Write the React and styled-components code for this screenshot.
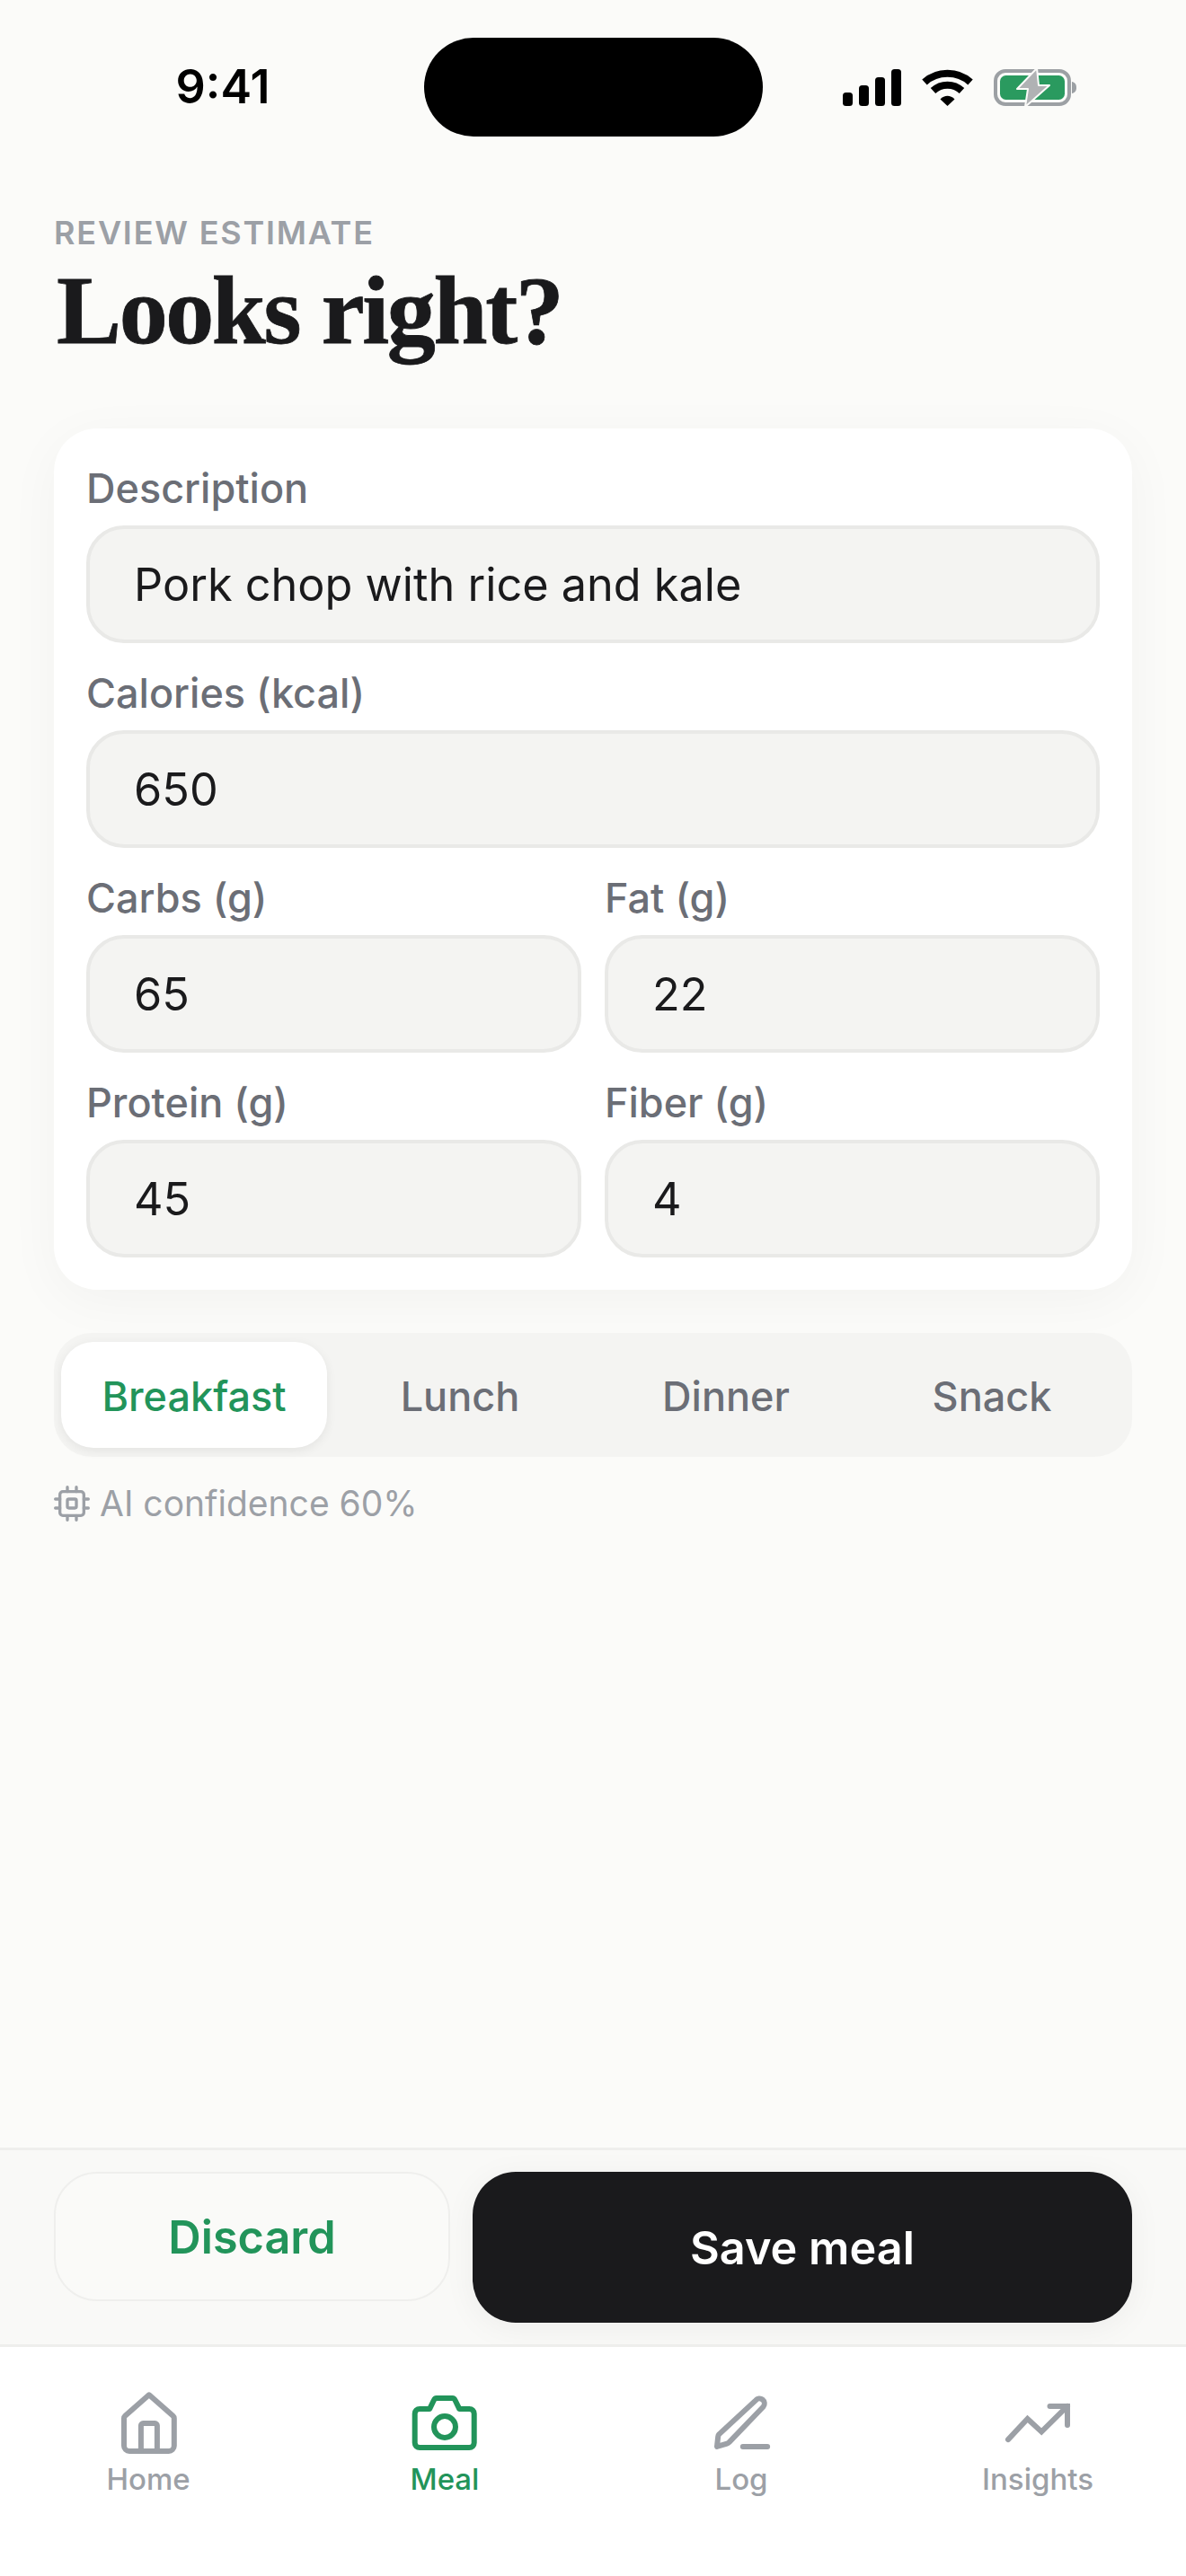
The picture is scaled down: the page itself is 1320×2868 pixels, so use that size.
import styled, { createGlobalStyle } from 'styled-components';

const GlobalStyle = createGlobalStyle`
  * { box-sizing: border-box; }
  html, body { margin: 0; padding: 0; background: #fbfbf9; }
  body { font-family: Inter, "Noto Sans", sans-serif; }
`;

const FIELDS = [
  { rows: [{ label: 'Description', value: 'Pork chop with rice and kale' }] },
  { rows: [{ label: 'Calories (kcal)', value: '650' }] },
  { rows: [{ label: 'Carbs (g)', value: '65' }, { label: 'Fat (g)', value: '22' }] },
  { rows: [{ label: 'Protein (g)', value: '45' }, { label: 'Fiber (g)', value: '4' }] },
];

const MEALS = ['Breakfast', 'Lunch', 'Dinner', 'Snack'];

function HomeIcon() {
  return (
    <svg viewBox="0 0 24 24" width="72" height="72" fill="none" stroke="currentColor" strokeWidth="2" strokeLinejoin="round" strokeLinecap="round">
      <path d="M3 9.800a1.200 1.200 0 0 1 .4-.9L12.300 1.100l8.900 7.800a1.200 1.200 0 0 1 .4.9V20a2 2 0 0 1-2 2H5a2 2 0 0 1-2-2z" />
      <path d="M9.300 22v-9.500a.8.800 0 0 1 .8-.8h4.400a.8.800 0 0 1 .8.800V22" />
    </svg>
  );
}

function CameraIcon() {
  return (
    <svg viewBox="0 0 24 24" width="72" height="72" fill="none" stroke="currentColor" strokeWidth="2" strokeLinejoin="round" strokeLinecap="round">
      <path d="M.9 8.100a1.800 1.800 0 0 1 1.800-1.800h3.700l1.600-3.300a1.200 1.200 0 0 1 1-.7h5.800a1.200 1.200 0 0 1 1 .7l1.600 3.300h3.700a1.800 1.800 0 0 1 1.800 1.800v10.800a1.800 1.800 0 0 1-1.800 1.800H2.700a1.800 1.800 0 0 1-1.800-1.800z" />
      <circle cx="12" cy="13" r="4" />
    </svg>
  );
}

function PenIcon() {
  return (
    <svg viewBox="0 0 24 24" width="72" height="72" fill="none" stroke="currentColor" strokeWidth="2" strokeLinejoin="round" strokeLinecap="round">
      <path d="M12.600 20.300h9.100" />
      <path d="M17.300 3.200a1.800 1.800 0 0 1 2.900 2.300L7.500 18.700a1.600 1.600 0 0 1-.8.500L3 20.300l.4-3.700a1.600 1.600 0 0 1 .4-.9z" />
    </svg>
  );
}

function TrendIcon() {
  return (
    <svg viewBox="0 0 24 24" width="72" height="72" fill="none" stroke="currentColor" strokeWidth="2" strokeLinejoin="miter" strokeLinecap="round">
      <path d="M16.500 5.300H23v7" />
      <path d="M23 5.300l-9.600 9.500-5.200-4.800L1 17.700" />
    </svg>
  );
}

function ChipIcon() {
  return (
    <svg viewBox="0 0 24 24" width="40" height="40" fill="none" stroke="currentColor" strokeWidth="2" strokeLinejoin="round" strokeLinecap="round">
      <rect x="4" y="4" width="16" height="16" rx="2" />
      <rect x="9" y="9" width="6" height="6" rx="1" />
      <path d="M9 1v3M15 1v3M9 20v3M15 20v3M20 9h3M20 15h3M1 9h3M1 15h3" />
    </svg>
  );
}

function SignalIcon() {
  return (
    <svg viewBox="0 0 65 41" width="65" height="41" fill="#000">
      <rect x="0" y="26" width="11" height="15" rx="3.500" />
      <rect x="18" y="18" width="11" height="23" rx="3.500" />
      <rect x="36" y="9" width="11" height="32" rx="3.500" />
      <rect x="54" y="0" width="11" height="41" rx="3.500" />
    </svg>
  );
}

function WifiIcon() {
  return (
    <svg viewBox="0 0 57 42" width="57" height="42" fill="none" stroke="#000" strokeWidth="8">
      <path d="M3 15.500C17 2.500 40 2.500 54 15.500" />
      <path d="M12.500 25C21.500 16.500 35.500 16.500 44.500 25" />
      <path d="M20.500 34.500L28.500 42L36.500 34.500C32 29.500 25 29.500 20.500 34.500Z" fill="#000" stroke="none" />
    </svg>
  );
}

function BatteryIcon() {
  return (
    <svg viewBox="0 0 93 43" width="93" height="43" fill="none">
      <rect x="2" y="3" width="82" height="37" rx="11" stroke="#9ca0a4" strokeWidth="4" />
      <rect x="7" y="8" width="72" height="27" rx="6.500" fill="#2a9a5f" />
      <path d="M87 15c3 .5 5 2.500 5 6.500s-2 6-5 6.500z" fill="#9ca0a4" />
      <path d="M48 0L26 23h12l-3 20 27-24H50z" fill="#b0b2b4" stroke="#fbfbf9" strokeWidth="2" strokeLinejoin="round" />
    </svg>
  );
}

const TABS = [
  { label: 'Home', Icon: HomeIcon },
  { label: 'Meal', Icon: CameraIcon, active: true },
  { label: 'Log', Icon: PenIcon },
  { label: 'Insights', Icon: TrendIcon },
];

export default function App() {
  return (
    <Screen>
      <GlobalStyle />
      <StatusBar>
        <Time>9:41</Time>
        <Island />
        <StatusIcons>
          <SignalIcon />
          <WifiIcon />
          <BatteryIcon />
        </StatusIcons>
      </StatusBar>
      <Main>
        <Eyebrow>Review estimate</Eyebrow>
        <Title>Looks right?</Title>
        <Card>
          {FIELDS.map((row, i) => (
            <FieldRow key={i} $columns={row.rows.length}>
              {row.rows.map((field) => (
                <Field key={field.label}>
                  <FieldLabel>{field.label}</FieldLabel>
                  <FieldInput type="text" value={field.value} readOnly />
                </Field>
              ))}
            </FieldRow>
          ))}
        </Card>
        <Segments>
          {MEALS.map((meal, i) => (
            <Segment key={meal} $active={i === 0}>{meal}</Segment>
          ))}
        </Segments>
        <Confidence>
          <ChipIcon />
          <span>AI confidence 60%</span>
        </Confidence>
      </Main>
      <Actions>
        <DiscardButton>Discard</DiscardButton>
        <SaveButton>Save meal</SaveButton>
      </Actions>
      <BottomNav>
        {TABS.map(({ label, Icon, active }) => (
          <NavItem key={label} $active={active}>
            <NavIconSlot><Icon /></NavIconSlot>
            <NavLabel>{label}</NavLabel>
          </NavItem>
        ))}
      </BottomNav>
    </Screen>
  );
}

const Screen = styled.div`
  width: 1320px;
  height: 2868px;
  display: flex;
  flex-direction: column;
  background: #fbfbf9;
  color: #1a1a1c;
  overflow: hidden;
`;

const StatusBar = styled.header`
  display: grid;
  grid-template-columns: 472px 377px 471px;
  align-items: center;
  padding-top: 42px;
`;

const Time = styled.div`
  justify-self: center;
  padding-left: 24px;
  font-size: 52px;
  font-weight: 600;
  line-height: 110px;
  color: #000;
`;

const Island = styled.div`
  height: 110px;
  border-radius: 55px;
  background: #000;
`;

const StatusIcons = styled.div`
  display: flex;
  align-items: center;
  gap: 23px;
  padding-left: 89px;

  svg { display: block; }
`;

const Main = styled.main`
  flex: 1;
  display: flex;
  flex-direction: column;
  padding: 87px 60px 0;
`;

const Eyebrow = styled.div`
  font-size: 36px;
  line-height: 40px;
  font-weight: 600;
  letter-spacing: 1.8px;
  text-transform: uppercase;
  color: #9ca0a6;
`;

const Title = styled.h1`
  margin: 12px 0 76px;
  padding-left: 3px;
  font-family: "Liberation Serif", serif;
  font-size: 108px;
  line-height: 110px;
  font-weight: 700;
  letter-spacing: -2.4px;
  -webkit-text-stroke: 0.8px #1a1a1c;
  color: #1a1a1c;
`;

const Card = styled.section`
  display: flex;
  flex-direction: column;
  gap: 25px;
  padding: 36px;
  border-radius: 48px;
  background: #fff;
  box-shadow: 0 12px 60px rgb(0 0 0 / 4%);
`;

const FieldRow = styled.div`
  display: grid;
  grid-template-columns: repeat(${(p) => p.$columns}, 1fr);
  gap: 26px;
`;

const Field = styled.label`
  display: flex;
  flex-direction: column;
  gap: 12px;
`;

const FieldLabel = styled.span`
  padding-top: 2px;
  font-size: 45px;
  line-height: 58px;
  font-weight: 500;
  color: #6b6e76;
`;

const FieldInput = styled.input`
  width: 100%;
  height: 131px;
  padding: 0 49px;
  border: 4px solid #e9e9e7;
  border-radius: 42px;
  background: #f4f4f2;
  font-family: inherit;
  font-size: 50.4px;
  color: #1a1a1c;
  outline: none;
`;

const Segments = styled.div`
  display: grid;
  grid-template-columns: repeat(4, 1fr);
  margin-top: 48px;
  padding: 10px 8px;
  border-radius: 42px;
  background: #f4f4f2;
`;

const Segment = styled.div`
  height: 118px;
  padding-top: 2px;
  display: flex;
  align-items: center;
  justify-content: center;
  border-radius: 36px;
  font-size: 45px;
  font-weight: 500;
  background: ${(p) => (p.$active ? '#fff' : 'transparent')};
  color: ${(p) => (p.$active ? '#22945a' : '#6b6e76')};
  box-shadow: ${(p) => (p.$active ? '0 3px 12px rgb(0 0 0 / 7%)' : 'none')};
`;

const Confidence = styled.div`
  display: flex;
  align-items: center;
  gap: 11px;
  margin-top: 28px;
  font-size: 39px;
  line-height: 48px;
  color: #9ca0a6;
`;

const Actions = styled.div`
  display: flex;
  align-items: flex-start;
  gap: 25px;
  height: 219px;
  padding: 24px 60px 0;
  border-top: 3px solid #efefed;
  background: #f9f9f7;
`;

const DiscardButton = styled.button`
  width: 441px;
  height: 144px;
  border: 2px solid #efefed;
  border-radius: 48px;
  background: #fafaf8;
  font-family: inherit;
  font-size: 50.4px;
  font-weight: 600;
  color: #22945a;
`;

const SaveButton = styled.button`
  flex: 1;
  height: 168px;
  border: none;
  border-radius: 48px;
  background: #1a1a1c;
  box-shadow: 0 6px 36px rgb(0 0 0 / 5%);
  font-family: inherit;
  font-size: 50.4px;
  font-weight: 600;
  color: #fff;
`;

const BottomNav = styled.nav`
  display: grid;
  grid-template-columns: repeat(4, 1fr);
  height: 258px;
  padding-top: 50px;
  border-top: 3px solid #eeeeec;
  background: #fff;
`;

const NavItem = styled.div`
  display: flex;
  flex-direction: column;
  align-items: center;
  color: ${(p) => (p.$active ? '#22945a' : '#9ca0a6')};

  svg { overflow: visible; }
`;

const NavIconSlot = styled.div`
  height: 72px;

  svg { display: block; }
`;

const NavLabel = styled.span`
  margin-top: 3px;
  font-size: 33px;
  line-height: 44px;
  font-weight: 500;
`;
